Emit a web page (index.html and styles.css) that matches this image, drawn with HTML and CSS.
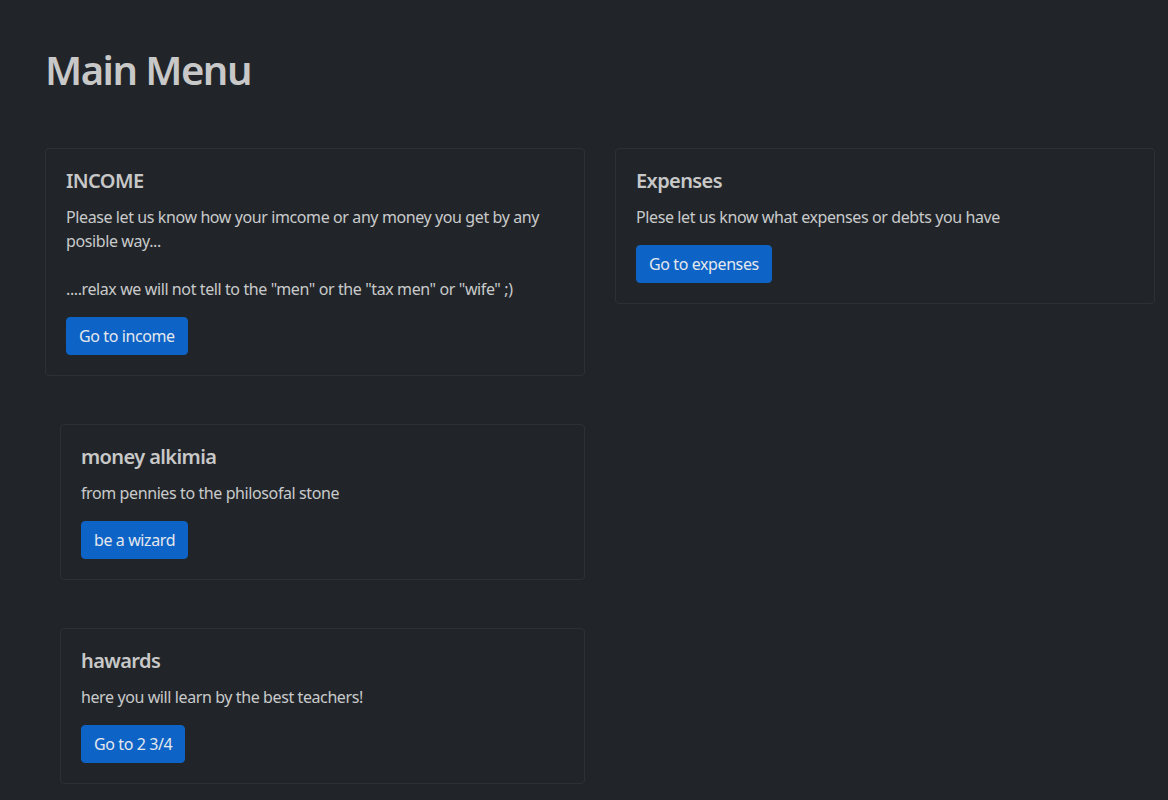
FILE: index.html
```html
<!DOCTYPE html>
<html lang="en">
<head>
<meta charset="utf-8">
<title>Main Menu</title>
<link rel="stylesheet" href="styles.css">
</head>
<body>
<div class="container">
  <h1 class="page-title">Main Menu</h1>
  <div class="row">
    <div class="col">
      <div class="card">
        <h5 class="card-title">INCOME</h5>
        <p class="card-text">Please let us know how your imcome or any money you get by any posible way...<br><br>....relax we will not tell to the "men" or the "tax men" or "wife" ;)</p>
        <a class="btn" href="#">Go to income</a>
      </div>
    </div>
    <div class="col">
      <div class="card">
        <h5 class="card-title">Expenses</h5>
        <p class="card-text">Plese let us know what expenses or debts you have</p>
        <a class="btn" href="#">Go to expenses</a>
      </div>
    </div>
  </div>
  <div class="row">
    <div class="col">
      <div class="card inset">
        <h5 class="card-title">money alkimia</h5>
        <p class="card-text">from pennies to the philosofal stone</p>
        <a class="btn" href="#">be a wizard</a>
      </div>
      <div class="card inset">
        <h5 class="card-title">hawards</h5>
        <p class="card-text">here you will learn by the best teachers!</p>
        <a class="btn" href="#">Go to 2 3/4</a>
      </div>
    </div>
    <div class="col"></div>
  </div>
</div>
</body>
</html>
```
FILE: styles.css
```css
* { box-sizing: border-box; }
html, body {
  margin: 0;
  background: #212529;
}
body {
  font-family: "Noto Sans", "Open Sans", sans-serif;
  font-size: 16px;
  line-height: 1.5;
  letter-spacing: -0.4px;
  color: #c9cacb;
  overflow: hidden;
}
.container {
  width: 1140px;
  padding: 0 15px;
  margin-left: 30px;
}
.page-title {
  margin: 0;
  padding-top: 46px;
  font-size: 40px;
  font-weight: 600;
  line-height: 48px;
  letter-spacing: -1.5px;
  color: #c8c8c8;
}
.row {
  display: flex;
  gap: 30px;
  align-items: flex-start;
  margin-top: 54px;
}
.row + .row { margin-top: 48px; }
.col {
  flex: 1 1 0;
  display: flex;
  flex-direction: column;
  gap: 48px;
}
.card {
  border: 1px solid #2d3135;
  border-radius: 4px;
  padding: 20px;
}
.card.inset { margin-left: 15px; }
.card-title {
  margin: 0 0 12px;
  font-size: 20px;
  font-weight: 600;
  line-height: 24px;
  letter-spacing: -0.6px;
  color: #c8c8c8;
}
.card-text {
  margin: 0 0 16px;
}
.btn {
  display: inline-block;
  padding: 6px 12px;
  font-size: 16px;
  line-height: 24px;
  border: 1px solid #0d63c6;
  border-radius: 4px;
  background: #0d63c6;
  color: #e4e8ee;
  text-decoration: none;
}
```
